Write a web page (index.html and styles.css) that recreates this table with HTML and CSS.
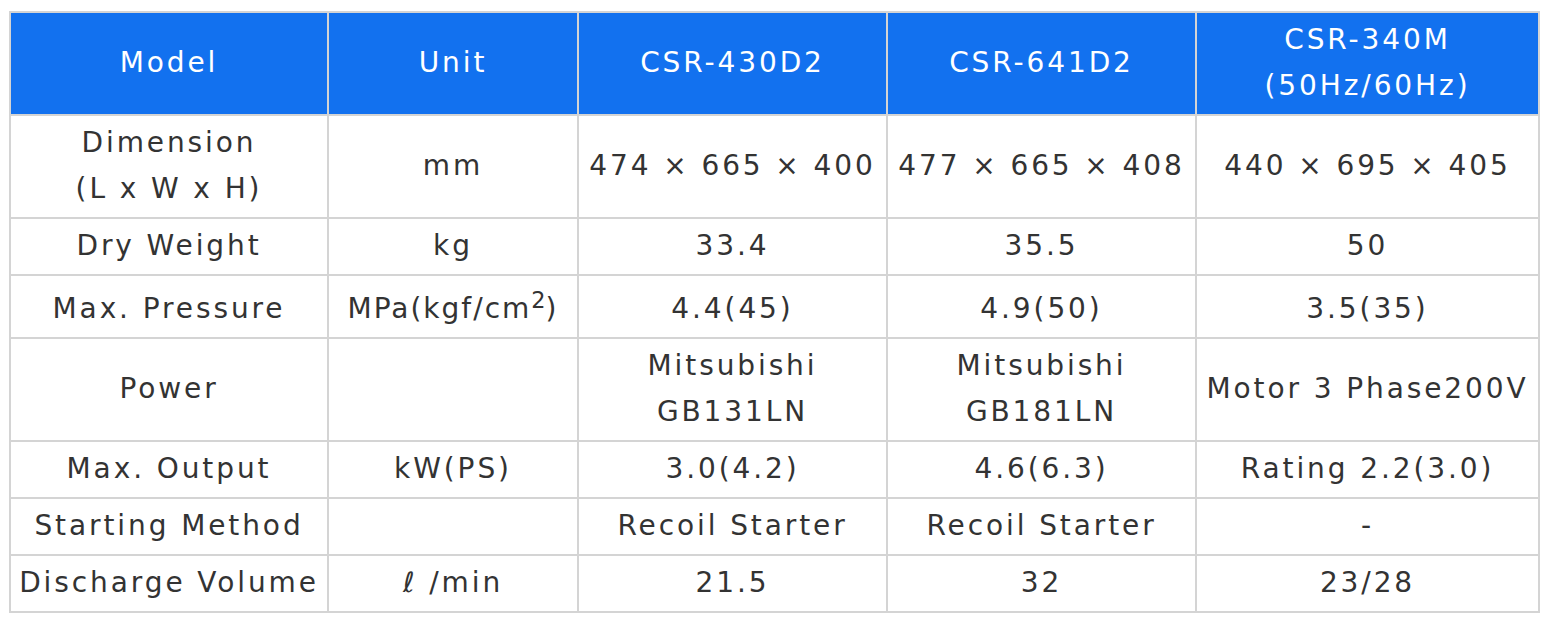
FILE: index.html
```html
<!DOCTYPE html>
<html>
<head>
<meta charset="utf-8">
<link rel="stylesheet" href="styles.css">
</head>
<body>
<table class="spec">
  <colgroup>
    <col class="c1"><col class="c2"><col class="c3"><col class="c4"><col class="c5">
  </colgroup>
  <thead>
    <tr>
      <th>Model</th>
      <th>Unit</th>
      <th>CSR-430D2</th>
      <th>CSR-641D2</th>
      <th>CSR-340M<br>(50Hz/60Hz)</th>
    </tr>
  </thead>
  <tbody>
    <tr>
      <td>Dimension<br>(L x W x H)</td>
      <td>mm</td>
      <td>474 × 665 × 400</td>
      <td>477 × 665 × 408</td>
      <td>440 × 695 × 405</td>
    </tr>
    <tr>
      <td>Dry Weight</td>
      <td>kg</td>
      <td>33.4</td>
      <td>35.5</td>
      <td>50</td>
    </tr>
    <tr class="sup-row">
      <td>Max. Pressure</td>
      <td class="tight">MPa(kgf/cm<sup>2</sup>)</td>
      <td>4.4(45)</td>
      <td>4.9(50)</td>
      <td>3.5(35)</td>
    </tr>
    <tr>
      <td>Power</td>
      <td></td>
      <td>Mitsubishi<br>GB131LN</td>
      <td>Mitsubishi<br>GB181LN</td>
      <td>Motor 3 Phase200V</td>
    </tr>
    <tr>
      <td>Max. Output</td>
      <td>kW(PS)</td>
      <td>3.0(4.2)</td>
      <td>4.6(6.3)</td>
      <td>Rating 2.2(3.0)</td>
    </tr>
    <tr>
      <td>Starting Method</td>
      <td></td>
      <td>Recoil Starter</td>
      <td>Recoil Starter</td>
      <td>-</td>
    </tr>
    <tr>
      <td>Discharge Volume</td>
      <td>ℓ /min</td>
      <td>21.5</td>
      <td>32</td>
      <td>23/28</td>
    </tr>
  </tbody>
</table>
</body>
</html>
```
FILE: styles.css
```css
html, body {
  margin: 0;
  padding: 0;
  background: #ffffff;
}
body {
  padding: 11px 0 0 9px;
}
.spec {
  border-collapse: collapse;
  table-layout: fixed;
  width: 1529px;
  font-family: "DejaVu Sans", Verdana, sans-serif;
  font-size: 28px;
  line-height: 46px;
  letter-spacing: 2.9px;
  color: #333333;
}
.c1 { width: 318px; }
.c2 { width: 250px; }
.c3 { width: 309px; }
.c4 { width: 309px; }
.c5 { width: 343px; }
.spec th,
.spec td {
  border: 2px solid #d4d4d4;
  padding: 4px 0 5px;
  text-align: center;
  vertical-align: middle;
  white-space: nowrap;
  font-weight: normal;
}
.spec th {
  background: #1271ef;
  color: #ffffff;
}
.spec .sup-row td {
  padding: 10px 0 5px;
}
.spec sup {
  font-size: 0.8em;
  line-height: 0;
  letter-spacing: 0;
}
.tight {
  letter-spacing: 2px;
}
```
